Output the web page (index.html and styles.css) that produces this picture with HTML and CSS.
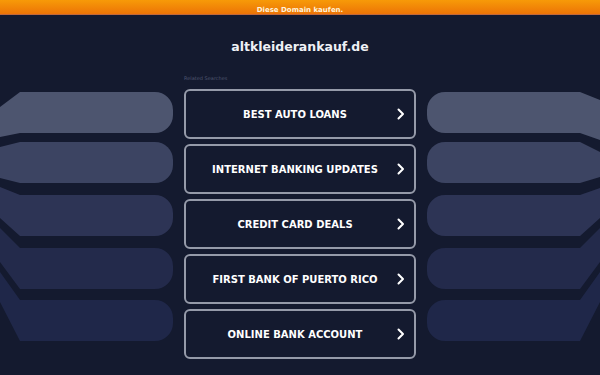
FILE: index.html
```html
<!DOCTYPE html>
<html lang="de">
<head>
  <meta charset="UTF-8">
  <meta name="viewport" content="width=device-width, initial-scale=1.0">
  <link rel="stylesheet" href="styles.css">
</head>
<body>

  <div class="topbar"><a href="#">Diese Domain kaufen.</a></div>

  <h1 class="domain">altkleiderankauf.de</h1>

  <div class="row">
    <svg class="deco" width="174" height="290" viewBox="0 72 174 290">
      <path fill="#4d556f" d="M0 107 L20 92 H155 A18 18 0 0 1 173 110 V115 A18 18 0 0 1 155 133 H20 L0 137 Z"/>
      <path fill="#3c4462" d="M0 147 L20 142 H155 A18 18 0 0 1 173 160 V165 A18 18 0 0 1 155 183 H20 L0 178 Z"/>
      <path fill="#2d3455" d="M0 187 L20 195 H155 A18 18 0 0 1 173 213 V218 A18 18 0 0 1 155 236 H20 L0 218 Z"/>
      <path fill="#232a4b" d="M0 228 L20 248 H155 A18 18 0 0 1 173 266 V271 A18 18 0 0 1 155 289 H20 L0 262 Z"/>
      <path fill="#1f2749" d="M0 272 L20 300 H155 A18 18 0 0 1 173 318 V323 A18 18 0 0 1 155 341 H20 L0 302 Z"/>
    </svg>

    <div class="searches">
      <div class="label">Related Searches</div>
      <a class="item" href="#"><span>BEST AUTO LOANS</span><svg width="8" height="12" viewBox="0 0 8 12"><polyline points="1.5,1.5 6,6 1.5,10.5"/></svg></a>
      <a class="item" href="#"><span>INTERNET BANKING UPDATES</span><svg width="8" height="12" viewBox="0 0 8 12"><polyline points="1.5,1.5 6,6 1.5,10.5"/></svg></a>
      <a class="item" href="#"><span>CREDIT CARD DEALS</span><svg width="8" height="12" viewBox="0 0 8 12"><polyline points="1.5,1.5 6,6 1.5,10.5"/></svg></a>
      <a class="item" href="#"><span>FIRST BANK OF PUERTO RICO</span><svg width="8" height="12" viewBox="0 0 8 12"><polyline points="1.5,1.5 6,6 1.5,10.5"/></svg></a>
      <a class="item" href="#"><span>ONLINE BANK ACCOUNT</span><svg width="8" height="12" viewBox="0 0 8 12"><polyline points="1.5,1.5 6,6 1.5,10.5"/></svg></a>
    </div>

    <svg class="deco" width="174" height="290" viewBox="0 72 174 290">
      <g transform="translate(174,0) scale(-1,1)">
        <path fill="#4d556f" d="M0 100 L20 92 H155 A18 18 0 0 1 173 110 V115 A18 18 0 0 1 155 133 H20 L0 140 Z"/>
        <path fill="#3c4462" d="M0 152 L20 142 H155 A18 18 0 0 1 173 160 V165 A18 18 0 0 1 155 183 H20 L0 177 Z"/>
        <path fill="#2d3455" d="M0 188 L20 195 H155 A18 18 0 0 1 173 213 V218 A18 18 0 0 1 155 236 H20 L0 218 Z"/>
        <path fill="#232a4b" d="M0 228 L20 248 H155 A18 18 0 0 1 173 266 V271 A18 18 0 0 1 155 289 H20 L0 262 Z"/>
        <path fill="#1f2749" d="M0 272 L20 300 H155 A18 18 0 0 1 173 318 V323 A18 18 0 0 1 155 341 H20 L0 302 Z"/>
      </g>
    </svg>
  </div>

</body>
</html>
```

FILE: styles.css
```css
body {
  margin: 0;
  background-color: #141a2f;
  font-family: "DejaVu Sans", Verdana, sans-serif;
  color: #ffffff;
  height: 375px;
  overflow: hidden;
}

.topbar {
  height: 15px;
  background: linear-gradient(#f79a08, #ec7406);
  border-bottom: 1px solid #c2683a;
  box-sizing: border-box;
  text-align: center;
  line-height: 14px;
}

.topbar a {
  color: #fff3dc;
  font-size: 7px;
  font-weight: bold;
  text-decoration: none;
}

.domain {
  margin: 0;
  padding-top: 24px;
  height: 33px;
  font-size: 12.5px;
  line-height: 16px;
  text-align: center;
  color: #eef0f5;
}

.row {
  display: flex;
  gap: 10px;
}

.deco {
  display: block;
  flex: none;
}

.searches {
  width: 232px;
  flex: none;
  display: flex;
  flex-direction: column;
  gap: 5px;
}

.label {
  margin-top: 3px;
  margin-bottom: 3px;
  font-size: 5px;
  line-height: 6px;
  color: #4f5670;
}

.item {
  height: 50px;
  box-sizing: border-box;
  border: 2px solid #959aa9;
  border-radius: 6px;
  display: flex;
  align-items: center;
  padding: 0 9px 0 7px;
  text-decoration: none;
  color: #ffffff;
}

.item span {
  flex: 1;
  text-align: center;
  font-size: 10px;
  font-weight: bold;
}

.item svg {
  flex: none;
}

.item polyline {
  fill: none;
  stroke: #ffffff;
  stroke-width: 2;
  stroke-linecap: round;
  stroke-linejoin: round;
}
```
